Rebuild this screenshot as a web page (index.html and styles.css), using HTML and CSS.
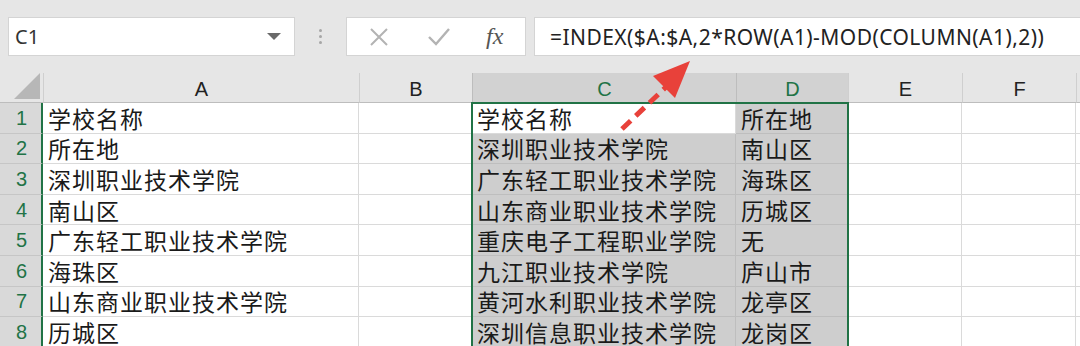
FILE: index.html
```html
<!DOCTYPE html>
<html lang="zh">
<head>
<meta charset="utf-8">
<link rel="stylesheet" href="styles.css">
</head>
<body>
<div class="app">
  <div class="toolbar">
    <div class="namebox">
      <span class="name">C1</span>
      <svg class="dd" width="14" height="8" viewBox="0 0 14 8"><path d="M0 0H14L7 7Z" fill="#6a6a6a"/></svg>
    </div>
    <div class="dots"><i></i><i></i><i></i></div>
    <div class="fxbox">
      <svg class="ico" width="22" height="22" viewBox="0 0 22 22"><path d="M3 3L19 19M19 3L3 19" stroke="#b3b3b3" stroke-width="2" fill="none"/></svg>
      <svg class="ico" width="24" height="22" viewBox="0 0 24 22"><path d="M2 11L9 18L22 3" stroke="#b3b3b3" stroke-width="2.4" fill="none"/></svg>
      <span class="fx">fx</span>
    </div>
    <div class="formula">=INDEX($A:$A,2*ROW(A1)-MOD(COLUMN(A1),2))</div>
  </div>
  <div class="sheet">
    <div class="grid">
      <div class="corner"><svg width="26" height="26" viewBox="0 0 26 26"><path d="M26 0V26H0Z" fill="#b7b7b7"/></svg></div>
      <div class="ch">A</div>
      <div class="ch">B</div>
      <div class="ch sel">C</div>
      <div class="ch sel">D</div>
      <div class="ch">E</div>
      <div class="ch">F</div>
      <div class="ch last"></div>

      <div class="rh">1</div><div class="c">学校名称</div><div class="c"></div><div class="c">学校名称</div><div class="c g">所在地</div><div class="c"></div><div class="c"></div><div class="c last"></div>
      <div class="rh">2</div><div class="c">所在地</div><div class="c"></div><div class="c g">深圳职业技术学院</div><div class="c g">南山区</div><div class="c"></div><div class="c"></div><div class="c last"></div>
      <div class="rh">3</div><div class="c">深圳职业技术学院</div><div class="c"></div><div class="c g">广东轻工职业技术学院</div><div class="c g">海珠区</div><div class="c"></div><div class="c"></div><div class="c last"></div>
      <div class="rh">4</div><div class="c">南山区</div><div class="c"></div><div class="c g">山东商业职业技术学院</div><div class="c g">历城区</div><div class="c"></div><div class="c"></div><div class="c last"></div>
      <div class="rh">5</div><div class="c">广东轻工职业技术学院</div><div class="c"></div><div class="c g">重庆电子工程职业学院</div><div class="c g">无</div><div class="c"></div><div class="c"></div><div class="c last"></div>
      <div class="rh">6</div><div class="c">海珠区</div><div class="c"></div><div class="c g">九江职业技术学院</div><div class="c g">庐山市</div><div class="c"></div><div class="c"></div><div class="c last"></div>
      <div class="rh">7</div><div class="c">山东商业职业技术学院</div><div class="c"></div><div class="c g">黄河水利职业技术学院</div><div class="c g">龙亭区</div><div class="c"></div><div class="c"></div><div class="c last"></div>
      <div class="rh">8</div><div class="c">历城区</div><div class="c"></div><div class="c g">深圳信息职业技术学院</div><div class="c g">龙岗区</div><div class="c"></div><div class="c"></div><div class="c last"></div>
    </div>
    <div class="selection"></div>
    <svg class="arrow" width="90" height="90" viewBox="0 0 90 90">
      <path d="M6 74L50 32" stroke="#e8413a" stroke-width="5" stroke-dasharray="12 7" stroke-linecap="butt" fill="none"/>
      <path d="M74 6L37 21L59 43Z" fill="#e8413a"/>
    </svg>
  </div>
</div>
</body>
</html>
```

FILE: styles.css
```css
* { box-sizing: border-box; }
html, body { margin: 0; padding: 0; }
body {
  width: 1080px;
  height: 346px;
  overflow: hidden;
  background: #e6e6e6;
  font-family: "Noto Sans", "Noto Sans CJK SC", sans-serif;
}
.app { display: flex; flex-direction: column; }
.toolbar {
  height: 73px;
  display: flex;
  align-items: center;
  padding: 0 0 0 8px;
  gap: 0;
}
.namebox {
  width: 287px;
  height: 39px;
  background: #fff;
  border: 1px solid #d4d4d4;
  display: flex;
  align-items: center;
  justify-content: space-between;
  padding: 0 13px 0 6px;
}
.name { font-size: 20px; color: #333; }
.dots {
  width: 51px;
  display: flex;
  flex-direction: column;
  align-items: center;
  gap: 3px;
}
.dots i { width: 3px; height: 3px; border-radius: 50%; background: #a6a6a6; display: block; }
.fxbox {
  width: 180px;
  height: 39px;
  background: #fff;
  border: 1px solid #d4d4d4;
  display: flex;
  align-items: center;
  padding: 0 0 0 21px;
  gap: 37px;
}
.fx {
  font-family: "Liberation Serif", serif;
  font-style: italic;
  font-size: 24px;
  color: #555;
  margin-left: -2px;
}
.formula {
  margin-left: 8px;
  flex: 1;
  height: 39px;
  background: #fff;
  border: 1px solid #d4d4d4;
  border-right: none;
  display: flex;
  align-items: center;
  padding-left: 15px;
  font-size: 21px;
  letter-spacing: 0.45px;
  color: #222;
}
.sheet { position: relative; }
.grid {
  display: grid;
  grid-template-columns: 43px 316px 113px 264px 112px 114px 114px 4px;
  grid-template-rows: 30px repeat(8, 30.6px);
  background: #fff;
}
.corner {
  background: #e6e6e6;
  border-bottom: 1px solid #bdbdbd;
  display: flex;
  align-items: flex-end;
  justify-content: flex-end;
  padding: 0 3px 3px 0;
}
.ch {
  background: #e6e6e6;
  border-left: 1px solid #cfcfcf;
  border-bottom: 1px solid #bdbdbd;
  display: flex;
  align-items: center;
  justify-content: center;
  font-family: "Liberation Sans", sans-serif;
  font-size: 20px;
  line-height: 24px;
  color: #222;
  padding-top: 2px;
}
.ch.sel { background: #d2d2d2; color: #217346; border-left-color: #bdbdbd; }
.ch.last { border-right: none; }
.rh {
  background: #d9d9d9;
  border-bottom: 1px solid #c6c6c6;
  border-right: 2px solid #217346;
  display: flex;
  align-items: center;
  justify-content: center;
  font-family: "Liberation Sans", sans-serif;
  font-size: 20px;
  line-height: 24px;
  color: #217346;
  padding-left: 2px;
}
.c {
  border-right: 1px solid #dadada;
  border-bottom: 1px solid #dadada;
  display: flex;
  align-items: center;
  padding-left: 5px;
  font-family: "Noto Sans CJK SC", sans-serif;
  font-size: 23px;
  line-height: 26px;
  letter-spacing: 1px;
  color: #1a1a1a;
  white-space: nowrap;
  overflow: visible;
}
.c.g { background: #cecece; border-right-color: #bebebe; border-bottom-color: #bebebe; }
.c.last { border-right: none; }
.selection {
  position: absolute;
  left: 471px;
  top: 29px;
  width: 378px;
  height: 260px;
  border: 2px solid #217346;
  pointer-events: none;
}
.arrow {
  position: absolute;
  left: 616px;
  top: -18px;
}
```
